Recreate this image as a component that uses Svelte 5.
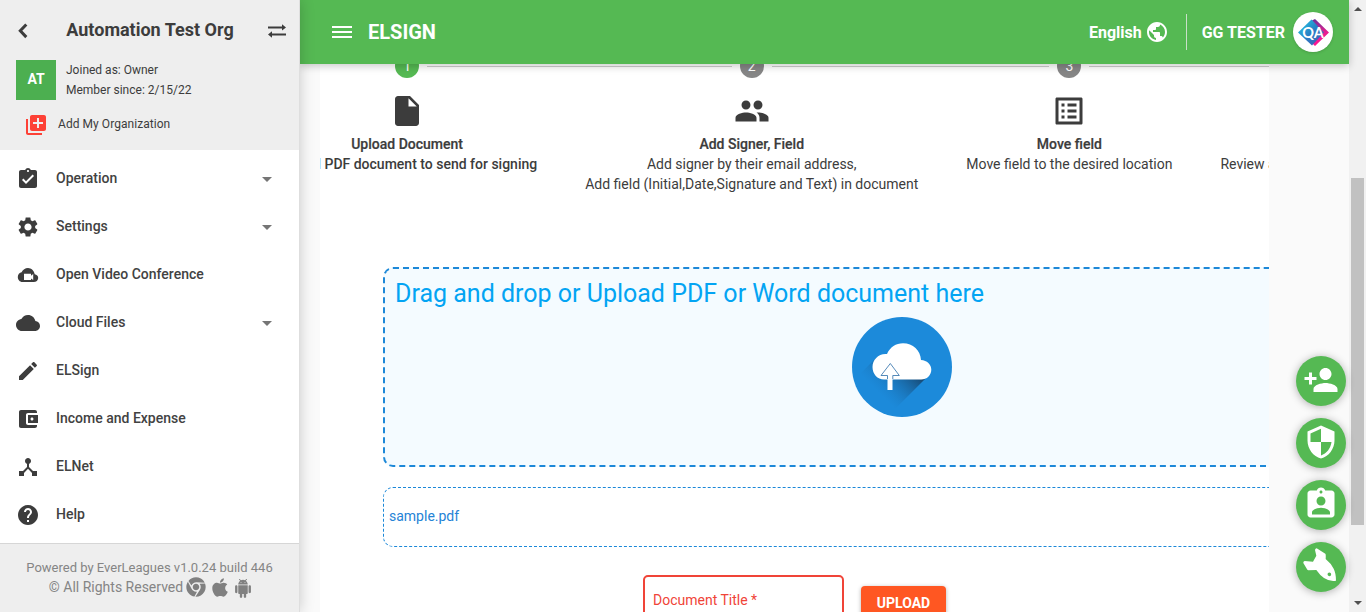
<script>
  const nav = [
    { label: 'Operation', more: true, d: 'M19 3h-4.18C14.4 1.84 13.3 1 12 1c-1.3 0-2.4.84-2.82 2H5c-1.1 0-2 .9-2 2v14c0 1.1.9 2 2 2h14c1.1 0 2-.9 2-2V5c0-1.1-.9-2-2-2zm-7 0c.55 0 1 .45 1 1s-.45 1-1 1-1-.45-1-1 .45-1 1-1zm-2 14l-4-4 1.41-1.41L10 14.17l6.59-6.59L18 9l-8 8z' },
    { label: 'Settings', more: true, d: 'M19.14 12.94c.04-.3.06-.61.06-.94 0-.32-.02-.64-.07-.94l2.03-1.58c.18-.14.23-.41.12-.61l-1.92-3.32c-.12-.22-.37-.29-.59-.22l-2.39.96c-.5-.38-1.03-.7-1.62-.94l-.36-2.54c-.04-.24-.24-.41-.48-.41h-3.84c-.24 0-.43.17-.47.41l-.36 2.54c-.59.24-1.13.57-1.62.94l-2.39-.96c-.22-.08-.47 0-.59.22L2.74 8.87c-.12.21-.08.47.12.61l2.03 1.58c-.05.3-.09.63-.09.94s.02.64.07.94l-2.03 1.58c-.18.14-.23.41-.12.61l1.92 3.32c.12.22.37.29.59.22l2.39-.96c.5.38 1.03.7 1.62.94l.36 2.54c.05.24.24.41.48.41h3.84c.24 0 .44-.17.47-.41l.36-2.54c.59-.24 1.13-.56 1.62-.94l2.39.96c.22.08.47 0 .59-.22l1.92-3.32c.12-.22.07-.47-.12-.61l-2.01-1.58zM12 15.6c-1.98 0-3.6-1.62-3.6-3.6s1.62-3.6 3.6-3.6 3.6 1.62 3.6 3.6-1.62 3.6-3.6 3.6z' },
    { label: 'Open Video Conference', d: 'M18.7 11.2C18.1 7.8 15.3 5 12 5 9.2 5 6.800 6.700 5.600 9.200 3.500 9.500 1.800 11.500 1.800 14c0 2.800 2 5 4.600 5h11.300c2.500 0 4.500-1.800 4.500-4.100 0-2-1.500-3.500-3.500-3.700zM17.200 17l-2.200-1.600V17H8v-6.200h7v1.900l2.200-1.600z' },
    { label: 'Cloud Files', more: true, d: 'M19.35 10.04C18.67 6.59 15.64 4 12 4 9.11 4 6.6 5.64 5.35 8.04 2.34 8.36 0 10.91 0 14c0 3.31 2.690 6 6 6h13c2.760 0 5-2.240 5-5 0-2.640-2.050-4.780-4.650-4.960z' },
    { label: 'ELSign', d: 'M3 17.250V21h3.750L17.810 9.940l-3.750-3.750L3 17.250zM20.710 7.040c.39-.39.39-1.020 0-1.410l-2.340-2.340c-.39-.39-1.020-.39-1.410 0l-1.830 1.830 3.750 3.750 1.830-1.830z' },
    { label: 'Income and Expense', d: 'M21 18v1c0 1.100-.9 2-2 2H5c-1.110 0-2-.9-2-2V5c0-1.100.89-2 2-2h14c1.100 0 2 .9 2 2v1h-9c-1.110 0-2 .9-2 2v8c0 1.100.89 2 2 2h9zm-9-2h10V8H12v8zm4-2.500c-.83 0-1.500-.67-1.500-1.500s.67-1.500 1.500-1.500 1.500.67 1.500 1.500-.67 1.500-1.500 1.500z' },
    { label: 'ELNet', d: 'M17 16l-4-4V8.820C14.160 8.400 15 7.300 15 6c0-1.660-1.340-3-3-3S9 4.340 9 6c0 1.300.84 2.400 2 2.820V12l-4 4H3v5h5v-3.050l4-4.200 4 4.200V21h5v-5h-4z' },
    { label: 'Help', d: 'M12 2C6.480 2 2 6.480 2 12s4.480 10 10 10 10-4.480 10-10S17.520 2 12 2zm1 17h-2v-2h2v2zm2.070-7.750l-.9.920C13.450 12.900 13 13.500 13 15h-2v-.5c0-1.100.45-2.100 1.170-2.830l1.240-1.260c.37-.36.59-.86.59-1.410 0-1.100-.9-2-2-2s-2 .9-2 2H8c0-2.210 1.790-4 4-4s4 1.790 4 4c0 .88-.36 1.680-.93 2.250z' }
  ];
  const steps = [
    { n: 1, title: 'Upload Document', lines: ['Upload PDF document to send for signing'], d: 'M6 2c-1.100 0-1.990.9-1.990 2L4 20c0 1.100.89 2 1.990 2H18c1.100 0 2-.9 2-2V8l-6-6H6zm7 7V3.500L18.500 9H13z' },
    { n: 2, title: 'Add Signer, Field', lines: ['Add signer by their email address,', 'Add field (Initial,Date,Signature and Text) in document'], d: 'M16 11c1.660 0 2.990-1.340 2.990-3S17.660 5 16 5c-1.660 0-3 1.340-3 3s1.340 3 3 3zm-8 0c1.660 0 2.990-1.340 2.990-3S9.660 5 8 5C6.340 5 5 6.340 5 8s1.340 3 3 3zm0 2c-2.330 0-7 1.170-7 3.500V19h14v-2.500c0-2.330-4.670-3.500-7-3.500zm8 0c-.29 0-.62.020-.97.050 1.160.84 1.970 1.970 1.970 3.450V19h6v-2.500c0-2.330-4.670-3.500-7-3.500z' },
    { n: 3, title: 'Move field', lines: ['Move field to the desired location'], d: 'M19 5v14H5V5h14m1.100-2H3.900c-.5 0-.9.4-.9.9v16.200c0 .4.4.9.9.9h16.200c.4 0 .9-.5.9-.9V3.900c0-.5-.5-.9-.9-.9zM11 7h6v2h-6V7zm0 4h6v2h-6v-2zm0 4h6v2h-6zM7 7h2v2H7zm0 4h2v2H7zm0 4h2v2H7z' },
    { n: 4, title: 'Review and Send', lines: ['Review and send document for signing'], d: 'M2.010 21L23 12 2.010 3 2 10l15 2-15 2z' }
  ];
  const fabs = [
    'M15 12c2.210 0 4-1.790 4-4s-1.790-4-4-4-4 1.790-4 4 1.790 4 4 4zm-9-2V7H4v3H1v2h3v3h2v-3h3v-2H6zm9 4c-2.670 0-8 1.340-8 4v2h16v-2c0-2.660-5.330-4-8-4z',
    'M12 1L3 5v6c0 5.550 3.840 10.740 9 12 5.160-1.260 9-6.450 9-12V5l-9-4zm0 10.990h7c-.53 4.120-3.280 7.790-7 8.940V12H5V6.300l7-3.110v8.800z',
    'M19 3h-4.180C14.400 1.840 13.300 1 12 1c-1.300 0-2.400.84-2.820 2H5c-1.100 0-2 .9-2 2v14c0 1.100.9 2 2 2h14c1.100 0 2-.9 2-2V5c0-1.100-.9-2-2-2zm-7 0c.55 0 1 .45 1 1s-.45 1-1 1-1-.45-1-1 .45-1 1-1zm0 4c1.660 0 3 1.340 3 3s-1.340 3-3 3-3-1.340-3-3 1.340-3 3-3zm6 12H6v-1.400c0-2 4-3.100 6-3.100s6 1.100 6 3.100V19z'
  ];
</script>

<div class="app">
  <aside>
    <div class="org">
      <div class="orgbar">
        <svg class="back" width="10" height="16" viewBox="0 0 10 16"><path d="M8.300 1.500L2.300 7.800l6 6.300" fill="none" stroke="#3c3c3c" stroke-width="3" /></svg>
        <h1>Automation Test Org</h1>
        <svg width="20" height="14" viewBox="0 0 20 14" fill="#3c3c3c"><path d="M1 2.400h14V.3l4 3.100-4 3.100V4.400H1zM19 9.600H5V7.300l-4 3.200 4 3.200v-2.100h14z" /></svg>
      </div>
      <div class="member">
        <div class="badge">AT</div>
        <div>Joined as: Owner<br />Member since: 2/15/22</div>
      </div>
      <div class="addorg">
        <svg width="24" height="24" viewBox="0 0 24 24" fill="#fd4136"><path d="M4 6H2v14c0 1.100.9 2 2 2h14v-2H4V6zm16-4H8c-1.100 0-2 .9-2 2v12c0 1.100.9 2 2 2h12c1.100 0 2-.9 2-2V4c0-1.100-.9-2-2-2zm-1 9h-4v4h-2v-4H9V9h4V5h2v4h4v2z" /></svg>
        <span>Add My Organization</span>
      </div>
    </div>
    <nav>
      {#each nav as item}
        <div class="item">
          <svg width="24" height="24" viewBox="0 0 24 24" fill="#3c3c3c"><path d={item.d} fill-rule="evenodd" /></svg>
          <span>{item.label}</span>
          {#if item.more}<i class="caret"></i>{/if}
        </div>
      {/each}
    </nav>
    <footer>
      <div>Powered by EverLeagues v1.0.24 build 446</div>
      <div class="rights">
        <span>© All Rights Reserved</span>
        <svg class="chrome" width="20" height="20" viewBox="0 0 496 512"><path d="M131.500 217.500L55.100 100.100c47.600-59.200 119-91.800 192-92.100 42.300-.3 85.500 10.500 124.800 33.200 43.400 25.200 76.400 61.400 97.400 103L264 133.400c-58.100-3.400-113.400 29.300-132.500 84.100zm32.900 38.500c0 46.200 37.400 83.600 83.600 83.600s83.600-37.400 83.600-83.600-37.400-83.600-83.600-83.600-83.600 37.300-83.600 83.600zm314.900-89.200L339.600 174c37.900 44.300 38.500 108.200 6.600 157.200L234.100 503.600c46.500 2.500 94.400-7.700 137.800-32.900 107.400-62 150.900-192 107.400-303.900zM133.700 303.600L40.400 120.100C14.900 159.100 0 205.900 0 256c0 124 90.800 226.700 209.500 244.900l63.700-124.800c-57.600 10.800-113.200-20.800-139.500-72.500z" /></svg>
        <svg class="apple" width="16" height="21" viewBox="0 0 384 512"><path d="M318.700 268.700c-.2-36.700 16.400-64.400 50-84.800-18.800-26.900-47.200-41.700-84.700-44.600-35.500-2.800-74.300 20.700-88.500 20.700-15 0-49.400-19.700-76.400-19.700C63.300 141.200 4 184.800 4 273.500q0 39.300 14.400 81.200c12.800 36.700 59 126.700 107.200 125.200 25.200-.6 43-17.900 75.800-17.900 31.800 0 48.300 17.900 76.400 17.900 48.600-.7 90.400-82.500 102.600-119.300-65.200-30.700-61.700-90-61.700-91.900zm-56.600-164.200c27.300-32.400 24.800-61.900 24-72.500-24.100 1.400-52 16.400-67.900 34.900-17.500 19.800-27.800 44.300-25.600 71.900 26.100 2 49.900-11.400 69.500-34.300z" /></svg>
        <svg class="android" width="16" height="19" viewBox="2 0 20 24"><path d="M6 18c0 .55.45 1 1 1h1v3.500c0 .83.67 1.500 1.500 1.500s1.500-.67 1.500-1.500V19h2v3.500c0 .83.67 1.500 1.500 1.500s1.500-.67 1.500-1.500V19h1c.55 0 1-.45 1-1V8H6v10zM3.500 8C2.670 8 2 8.670 2 9.500v7c0 .83.67 1.500 1.500 1.500S5 17.330 5 16.500v-7C5 8.670 4.330 8 3.500 8zm17 0c-.83 0-1.500.67-1.500 1.500v7c0 .83.67 1.500 1.500 1.500s1.500-.67 1.500-1.500v-7c0-.83-.67-1.500-1.500-1.500zm-4.970-5.840l1.300-1.300c.2-.2.2-.51 0-.71-.2-.2-.51-.2-.71 0l-1.480 1.480C13.850 1.230 12.950 1 12 1c-.96 0-1.860.23-2.660.63L7.850.15c-.2-.2-.51-.2-.71 0-.2.2-.2.51 0 .71l1.310 1.310C6.970 3.260 6 5.010 6 7h12c0-1.990-.97-3.750-2.470-4.840zM10 5H9V4h1v1zm5 0h-1V4h1v1z" /></svg>
      </div>
    </footer>
  </aside>

  <div class="main">
    <header>
      <svg class="burger" width="20" height="12" viewBox="0 0 20 12"><path d="M0 0h20v2H0zM0 5h20v2H0zM0 10h20v2H0z" fill="#fff" /></svg>
      <h2>ELSIGN</h2>
      <span class="lang">English</span>
      <svg class="globe" width="24" height="24" viewBox="0 0 24 24" fill="#fff"><path d="M12 2C6.480 2 2 6.480 2 12s4.480 10 10 10 10-4.480 10-10S17.520 2 12 2zm-1 17.930c-3.950-.49-7-3.850-7-7.930 0-.62.080-1.210.21-1.790L9 15v1c0 1.100.9 2 2 2v1.930zm6.900-2.540c-.26-.81-1-1.390-1.900-1.390h-1v-3c0-.55-.45-1-1-1H8v-2h2c.55 0 1-.45 1-1V7h2c1.100 0 2-.9 2-2v-.41c2.930 1.190 5 4.060 5 7.410 0 2.080-.8 3.970-2.100 5.390z" /></svg>
      <div class="sep"></div>
      <span class="user">GG TESTER</span>
      <div class="avatar">
        <svg width="40" height="40" viewBox="0 0 40 40">
          <defs>
            <linearGradient id="qa" x1="0" y1="0" x2="1" y2="1"><stop offset="0" stop-color="#27d3e6" /><stop offset=".5" stop-color="#277fc5" /><stop offset="1" stop-color="#4a55b5" /></linearGradient>
            <linearGradient id="pk" x1="0" y1="0" x2="0" y2="1"><stop offset="0" stop-color="#663399" /><stop offset=".5" stop-color="#e91e90" /><stop offset="1" stop-color="#ff1493" /></linearGradient>
          </defs>
          <path d="M22 7l14 13.500L22 34l-3-3 10.500-10.500L18 9z" fill="url(#pk)" />
          <path d="M18.500 7.500l12.500 13-12 13L5 20.500z" fill="url(#qa)" />
          <text x="20" y="25.500" text-anchor="middle" font-family="Lato, sans-serif" font-weight="700" font-size="14.500" fill="#fff">QA</text>
        </svg>
      </div>
    </header>

    <section>
      <div class="panel">
        <div class="steps">
          {#each steps as s, i}
            <div class="step">
              <div class="track">
                <div class="line" class:none={i === 0}></div>
                <div class="num" class:on={i === 0}>{s.n}</div>
                <div class="line" class:none={i === 3}></div>
              </div>
              <svg width="36" height="36" viewBox="0 0 24 24" fill="#3c3c3c"><path d={s.d} /></svg>
              <b>{s.title}</b>
              {#each s.lines as l}<div class="desc" class:active={i === 0}>{l}</div>{/each}
            </div>
          {/each}
        </div>
        <div class="drop">
          <div class="hint">Drag and drop or Upload PDF or Word document here</div>
          <svg width="100" height="100" viewBox="0 0 100 100">
            <defs>
              <linearGradient id="sh" gradientUnits="userSpaceOnUse" x1="58" y1="50" x2="30" y2="78"><stop offset="0" stop-color="#174a75" /><stop offset="1" stop-color="#1c88d8" stop-opacity="0.3" /></linearGradient>
            </defs>
            <circle cx="50" cy="50" r="50" fill="#1c8ada" />
            <path d="M24 41L8 57l35 35 33-33V50z" fill="url(#sh)" />
            <path d="M32 62.500C25.500 62.500 20.500 57 20.500 50S26 37 33.500 37h1.500C38 30 44 26.200 51 26.200c10 0 17.500 7 18 16.800 6 .3 10.300 4.500 10.300 9.700 0 5.500-4.500 9.800-10 9.800z" fill="#fff" />
            <path d="M38 46.500l9 12h-6.500V73h-5V58.500H29z" fill="#fff" />
            <path d="M35.500 62V58.500H29l9.300-12 9 12h-6.500V62" fill="none" stroke="#2b6da8" stroke-width=".8" />
          </svg>
        </div>
        <div class="file">sample.pdf</div>
        <div class="form">
          <div class="field">Document Title *</div>
          <div class="upload">UPLOAD</div>
        </div>
      </div>
    </section>
  </div>

  <div class="scroll">
    <i class="up"></i>
    <div class="thumb"></div>
    <i class="down"></i>
  </div>

  <div class="fabs">
    {#each fabs as d}
      <div class="fab"><svg class="glyph" width="36" height="36" viewBox="0 0 24 24" fill="#fff"><path {d} fill-rule="evenodd" /></svg></div>
    {/each}
    <div class="fab">
      <svg width="50" height="50" viewBox="0 0 150 150" fill="#fff"><path fill-rule="evenodd" d="M57 24q1-5 5-5l26 16q2 1 1 16 17 14 24 29 7 14 7 36-20 3-36-8-12-8-23-24l-24 1-3-2-12-20q-1-5 4-6l25 2 10-18zM100 91.500a5.500 5.500 0 1 0 .1 11 5.500 5.500 0 0 0-.1-11z" /></svg>
    </div>
  </div>
</div>

<style>
  :global(body) { margin: 0; }
  .app { position: relative; display: flex; width: 1366px; height: 612px; overflow: hidden; font-family: Roboto, sans-serif; font-size: 14px; color: #3c3c3c; background: #fafafa; }
  * { box-sizing: border-box; }
  svg { flex: none; display: block; }
  aside { width: 300px; flex: none; display: flex; flex-direction: column; background: #fff; border-right: 1px solid #dedede; box-shadow: 0 0 14px rgba(0, 0, 0, .2); z-index: 3; }
  .org { height: 150px; background: #eee; font-size: 12px; font-weight: 400; }
  .orgbar { display: flex; align-items: center; height: 60px; padding: 1px 12px 0 18px; }
  h1 { flex: 1; margin: 0; text-align: center; font-size: 18px; font-weight: 700; line-height: 24px; padding: 0 0 2px 5px; }
  .member { display: flex; padding-left: 16px; gap: 10px; line-height: 20px; }
  .badge { width: 40px; height: 40px; background: #4caf50; color: #fff; font-size: 14px; font-weight: 700; line-height: 39px; text-align: center; }
  .addorg { display: flex; align-items: center; padding: 13px 0 0 24px; gap: 10px; letter-spacing: .05px; }
  .addorg span { margin-top: -3px; }
  nav { flex: 1; padding-top: 4px; }
  .item { height: 48px; display: flex; align-items: center; padding: 1px 27px 0 16px; font-weight: 500; color: #424242; }
  .item span { flex: 1; margin: -2px 0 0 16px; }
  .caret { border: 5px solid transparent; border-top-color: #757575; border-bottom: 0; margin-top: 2px; }
  footer { height: 69px; border-top: 1px solid #d6d6d6; background: #eee; color: #858585; font-size: 13px; line-height: 20px; padding-top: 14px; text-align: center; }
  .rights { display: flex; justify-content: center; align-items: center; height: 20px; font-size: 14px; margin-top: -1px; padding-left: 1px; }
  .rights svg { fill: #808080; }
  .chrome { margin-left: 3px; }
  .apple { margin-left: 6px; }
  .android { margin-left: 7px; margin-top: 3px; }
  .main { width: 1049px; flex: none; display: flex; flex-direction: column; }
  header { height: 64px; flex: none; z-index: 2; background: #55b953; color: #fff; display: flex; align-items: center; padding: 0 16px 0 32px; box-shadow: 0 2px 8px rgba(0, 0, 0, .22); font-size: 16px; font-weight: 700; }
  h2 { flex: 1; margin: 0 0 0 16px; font-size: 20px; font-weight: 700; }
  .globe { margin: 0 17px 0 3px; }
  .sep { width: 1px; height: 36px; background: #c9dfc8; margin-right: 15px; }
  .avatar { width: 40px; height: 40px; border-radius: 50%; background: #fff; margin-left: 8px; box-shadow: 0 1px 3px rgba(0, 0, 0, .15); }
  section { height: 548px; padding: 0 80px 0 20px; overflow: hidden; }
  .panel { width: 949px; height: 548px; overflow: hidden; background: #fff; }
  .steps { display: flex; width: max-content; margin: -10px 0 0 -67px; height: 213px; }
  .step { display: flex; flex-direction: column; align-items: center; line-height: 20px; white-space: nowrap; }
  .step svg { margin: 15px 0 5px; }
  .step b { font-weight: 500; -webkit-text-stroke: .2px; }
  .desc { padding: 0 24px; }
  .desc.active { font-weight: 500; }
  .track { display: flex; align-items: center; width: 100%; gap: 8px; }
  .line { flex: 1; height: 1px; background: #ccc; }
  .line.none { background: none; }
  .num { width: 24px; height: 24px; border-radius: 50%; background: #868686; color: #fff; text-align: center; line-height: 24px; }
  .num.on { background: #55b953; }
  .drop { width: 1038px; height: 200px; margin-left: 63px; border: 2px dashed #1c88d8; border-radius: 10px; background: #f4fbff; display: flex; flex-direction: column; align-items: center; }
  .hint { align-self: stretch; color: #03a4f3; font-size: 25px; line-height: 30px; padding: 10px 10px 8px; }
  .file { width: 1038px; height: 60px; margin: 20px 0 0 63px; border: 1px dashed #1c88d8; border-radius: 10px; color: #2583d6; line-height: 56px; padding-left: 5px; }
  .form { display: flex; margin: 28px 0 0 323px; gap: 17px; }
  .field { width: 201px; height: 56px; border: 2px solid #f04438; border-radius: 5px; color: #f04438; line-height: 46px; padding-left: 8px; }
  .upload { margin-top: 11px; width: 85px; height: 36px; line-height: 34px; text-align: center; color: #fff; font-weight: 700; background: #ff5722; border-radius: 4px; box-shadow: 0 1px 4px rgba(0, 0, 0, .3); }
  .scroll { width: 17px; background: #f1f1f1; display: flex; flex-direction: column; align-items: center; }
  .thumb { width: 13px; height: 347px; background: #c1c1c1; margin-top: 167px; }
  .up, .down { border: 4px solid transparent; }
  .up { border-top: 0; border-bottom-color: #505050; margin-top: 7px; }
  .down { border-bottom: 0; border-top-color: #505050; margin-top: 76px; }
  .fabs { position: absolute; left: 1296px; top: 356px; display: flex; flex-direction: column; gap: 12px; z-index: 5; }
  .fab { width: 50px; height: 50px; border-radius: 50%; background: #55b953; display: flex; align-items: center; justify-content: center; box-shadow: 0 1px 8px rgba(0, 0, 0, .3); }
  .glyph { margin-bottom: 2px; }
</style>
